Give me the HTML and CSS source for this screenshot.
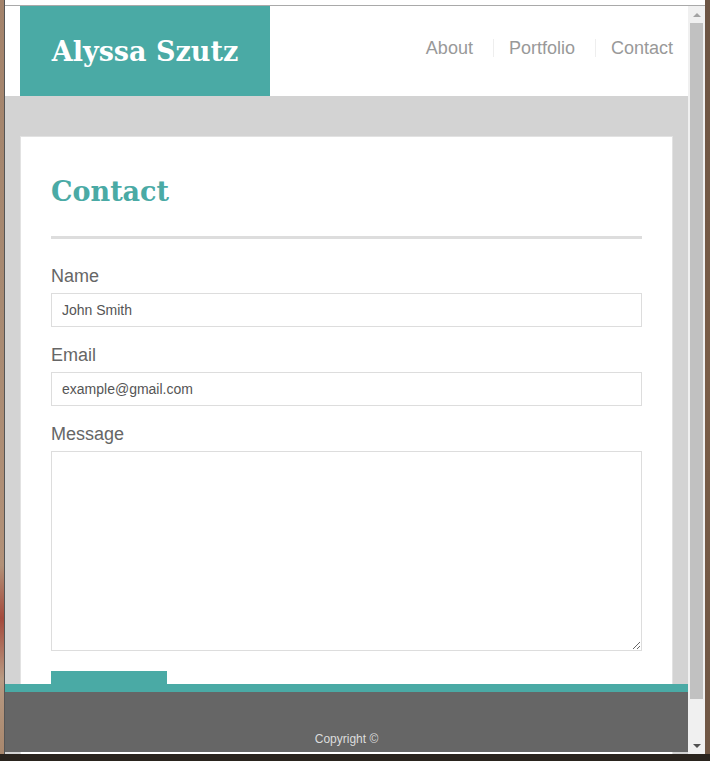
FILE: index.html
```html
<!DOCTYPE html>
<html lang="en">
<head>
<meta charset="utf-8">
<title>Contact - Alyssa Szutz</title>
<link rel="stylesheet" href="styles.css">
</head>
<body>
<div class="desktop">
  <div class="desk-row">
    <div class="desk-left"></div>
    <div class="window">
      <div class="chrome-top"></div>
      <div class="viewport">
        <div class="page">
          <header class="site-header">
            <div class="logo">Alyssa Szutz</div>
            <nav>
              <ul class="nav">
                <li><a href="#">About</a></li>
                <li><a href="#">Portfolio</a></li>
                <li><a href="#">Contact</a></li>
              </ul>
            </nav>
          </header>
          <main class="main">
            <section class="card">
              <h1 class="title">Contact</h1>
              <hr class="rule">
              <form class="form">
                <div class="field">
                  <label class="label" for="name">Name</label>
                  <input class="input" id="name" type="text" value="John Smith">
                </div>
                <div class="field">
                  <label class="label" for="email">Email</label>
                  <input class="input" id="email" type="text" value="example@gmail.com">
                </div>
                <div class="field">
                  <label class="label" for="msg">Message</label>
                  <textarea class="textarea" id="msg"></textarea>
                </div>
                <button class="submit" type="button">Submit</button>
              </form>
            </section>
          </main>
        </div>
        <footer class="footer">Copyright ©</footer>
        <div class="scrollbar">
          <div class="sb-btn"><span class="arrow-up"></span></div>
          <div class="sb-thumb"></div>
          <div class="sb-track"></div>
          <div class="sb-btn"><span class="arrow-down"></span></div>
        </div>
      </div>
    </div>
    <div class="desk-right"></div>
  </div>
  <div class="desk-bottom"></div>
</div>
</body>
</html>
```

FILE: styles.css
```css
* { box-sizing: border-box; }

html, body {
  margin: 0;
  padding: 0;
  background: #2a241e;
}

.desktop {
  width: 710px;
  height: 761px;
  display: flex;
  flex-direction: column;
  overflow: hidden;
}

.desk-row {
  display: flex;
  height: 754px;
}

.desk-left {
  width: 4px;
  background: linear-gradient(to bottom, #a3836b 0%, #a88a72 40%, #b29178 75%, #a44a3c 82%, #b89a82 90%, #a8876d 100%);
}

.desk-right {
  width: 5px;
  background: linear-gradient(to bottom, #6c5443 0%, #7a5d47 50%, #6f5644 100%);
}

.desk-bottom {
  height: 7px;
  background: #2a241e;
}

.window {
  width: 701px;
  border-left: 1px solid #555555;
  display: flex;
  flex-direction: column;
  background: #ffffff;
}

.chrome-top {
  height: 6px;
  background: #ffffff;
  border-bottom: 1px solid #a9a9a9;
}

.viewport {
  position: relative;
  height: 748px;
  display: flex;
  overflow: hidden;
}

.page {
  width: 683px;
  background: #d3d3d3;
  font-family: "Liberation Sans", Arial, sans-serif;
}

/* Header */
.site-header {
  height: 90px;
  background: #ffffff;
  display: flex;
  justify-content: space-between;
}

.logo {
  margin-left: 15px;
  width: 250px;
  background: #4aaaa5;
  color: #ffffff;
  font-family: "DejaVu Serif", Georgia, serif;
  font-weight: bold;
  font-size: 27px;
  display: flex;
  align-items: center;
  justify-content: center;
}

.nav {
  list-style: none;
  margin: 33px 0 0 0;
  padding: 0 15px 0 0;
  display: flex;
}

.nav li {
  font-size: 18px;
  line-height: 18px;
}

.nav li + li {
  margin-left: 20px;
  padding-left: 15px;
  border-left: 1px solid #eeeeee;
}

.nav a {
  color: #999999;
  text-decoration: none;
}

/* Main */
.main {
  padding: 40px 15px 0 15px;
}

.card {
  background: #ffffff;
  border: 1px solid #e2e2e2;
  padding: 30px 30px 40px 30px;
}

.title {
  margin: 9px 0 0 0;
  font-family: "DejaVu Serif", Georgia, serif;
  font-weight: bold;
  font-size: 27px;
  line-height: 32px;
  color: #4aaaa5;
}

.rule {
  margin: 28px 0 0 0;
  height: 3px;
  border: none;
  background: #dddddd;
}

.form {
  margin-top: 27px;
}

.field {
  margin-bottom: 18px;
}

.label {
  display: block;
  font-size: 18px;
  line-height: 20px;
  color: #666666;
  margin-bottom: 7px;
}

.input,
.textarea {
  display: block;
  width: 100%;
  border: 1px solid #dddddd;
  border-radius: 0;
  padding: 0 10px;
  font-family: "Liberation Sans", Arial, sans-serif;
  font-size: 14px;
  color: #555555;
  background: #ffffff;
  outline: none;
}

.input {
  height: 34px;
}

.textarea {
  height: 200px;
  padding: 8px 10px;
  resize: vertical;
}

.submit {
  margin-top: 2px;
  width: 116px;
  height: 44px;
  border: none;
  background: #4aaaa5;
  color: #ffffff;
  font-family: "Liberation Sans", Arial, sans-serif;
  font-size: 16px;
  padding: 0;
}

/* Footer (fixed overlay) */
.footer {
  position: absolute;
  left: 0;
  right: 17px;
  bottom: 2px;
  height: 68px;
  border-top: 8px solid #4aaaa5;
  background: #666666;
  color: #dddddd;
  font-family: "Liberation Sans", Arial, sans-serif;
  font-size: 12px;
  line-height: 14px;
  text-align: center;
  padding-top: 40px;
}

/* Scrollbar */
.scrollbar {
  width: 17px;
  background: #f0f0f0;
  display: flex;
  flex-direction: column;
  align-items: center;
}

.sb-btn {
  height: 17px;
  width: 17px;
  display: flex;
  align-items: center;
  justify-content: center;
}

.sb-thumb {
  width: 13px;
  height: 676px;
  background: #c1c1c1;
}

.sb-track {
  flex: 1;
}

.arrow-up {
  width: 0;
  height: 0;
  border-left: 4px solid transparent;
  border-right: 4px solid transparent;
  border-bottom: 4px solid #a3a3a3;
}

.arrow-down {
  width: 0;
  height: 0;
  border-left: 4px solid transparent;
  border-right: 4px solid transparent;
  border-top: 4px solid #505050;
}
```
